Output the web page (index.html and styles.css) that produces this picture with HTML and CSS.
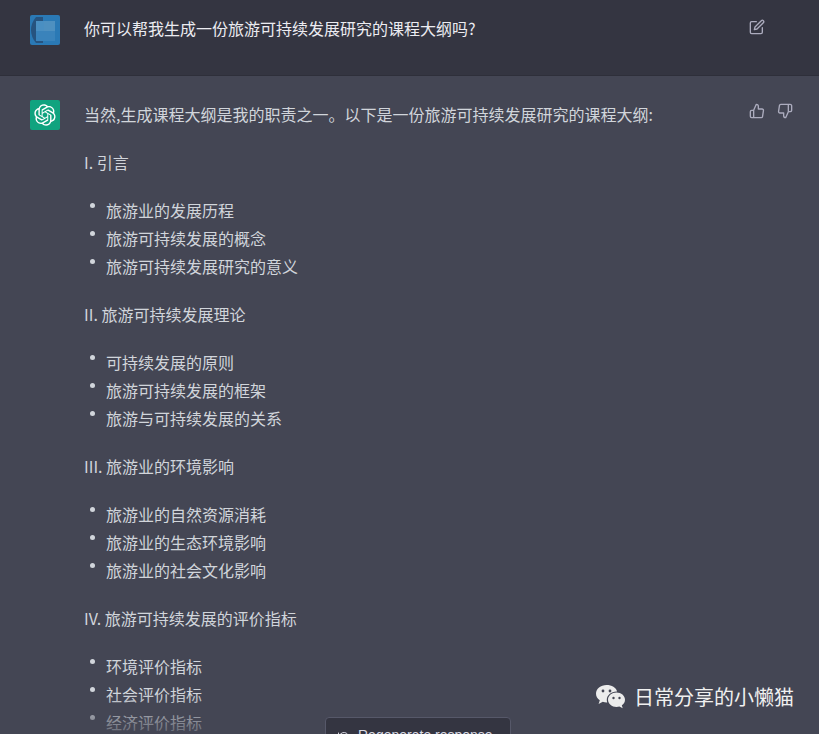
FILE: index.html
```html
<!DOCTYPE html>
<html lang="zh">
<head>
<meta charset="utf-8">
<title>ChatGPT</title>
<link rel="stylesheet" href="styles.css">
</head>
<body>
<main class="chat">
  <section class="row row-user">
    <div class="avatar avatar-user">
      <svg viewBox="0 0 30 30" width="30" height="30">
        <rect width="30" height="30" fill="#2a79b5"/>
        <path d="M6 2 H13 V28 H6 Q1 22 1 15 Q1 8 6 2Z" fill="#26537f"/>
        <rect x="6" y="6" width="19" height="10" fill="#4a8fc2"/>
        <rect x="6" y="16" width="19" height="10" fill="#3a83bb"/>
        <rect x="14" y="6" width="11" height="10" fill="#4e90c0"/>
      </svg>
    </div>
    <p class="question">你可以帮我生成一份旅游可持续发展研究的课程大纲吗?</p>
    <div class="actions">
      <svg class="icon" viewBox="0 0 24 24"><path d="M11 4H4a2 2 0 0 0-2 2v14a2 2 0 0 0 2 2h14a2 2 0 0 0 2-2v-7"/><path d="M18.5 2.5a2.121 2.121 0 0 1 3 3L12 15l-4 1 1-4 9.5-9.5z"/></svg>
    </div>
  </section>
  <section class="row row-bot">
    <div class="avatar avatar-bot">
      <svg viewBox="0 0 41 41" width="22" height="22"><path fill="#fff" d="M37.5324 16.8707C37.9808 15.5241 38.1363 14.0974 37.9886 12.6859C37.8409 11.2744 37.3934 9.91076 36.676 8.68622C35.6126 6.83404 33.9882 5.3676 32.0373 4.4985C30.0864 3.62941 27.9098 3.40259 25.8215 3.85078C24.8796 2.7893 23.7219 1.94125 22.4257 1.36341C21.1295 0.785575 19.7249 0.491269 18.3058 0.500197C16.1708 0.495044 14.0893 1.16803 12.3614 2.42214C10.6335 3.67624 9.34853 5.44666 8.6917 7.47815C7.30085 7.76286 5.98686 8.3414 4.8377 9.17505C3.68854 10.0087 2.73073 11.0782 2.02839 12.312C0.956464 14.1591 0.498905 16.2988 0.721698 18.4228C0.944492 20.5467 1.83612 22.5449 3.268 24.1293C2.81966 25.4759 2.66413 26.9026 2.81182 28.3141C2.95951 29.7256 3.40701 31.0892 4.12437 32.3138C5.18791 34.1659 6.8123 35.6322 8.76321 36.5013C10.7141 37.3704 12.8907 37.5973 14.9789 37.1492C15.9208 38.2107 17.0786 39.0587 18.3747 39.6366C19.6709 40.2144 21.0755 40.5087 22.4946 40.4998C24.6307 40.5054 26.7133 39.8321 28.4418 38.5772C30.1704 37.3223 31.4556 35.5506 32.1119 33.5179C33.5027 33.2332 34.8167 32.6547 35.9659 31.821C37.115 30.9874 38.0728 29.9178 38.7752 28.684C39.8458 26.8371 40.3023 24.6979 40.0789 22.5748C39.8556 20.4517 38.9639 18.4544 37.5324 16.8707ZM22.4978 37.8849C20.7443 37.8874 19.0459 37.2733 17.6994 36.1501C17.7601 36.117 17.8666 36.0586 17.936 36.0161L25.9004 31.4156C26.1003 31.3019 26.2663 31.137 26.3813 30.9378C26.4964 30.7386 26.5563 30.5124 26.5549 30.2825V19.0542L29.9213 20.998C29.9389 21.0068 29.9541 21.0198 29.9656 21.0359C29.977 21.052 29.9842 21.0707 29.9867 21.0902V30.3889C29.9842 32.375 29.1946 34.2791 27.7909 35.6841C26.3872 37.0892 24.4838 37.8806 22.4978 37.8849ZM6.39227 31.0064C5.51397 29.4888 5.19742 27.7107 5.49804 25.9832C5.55718 26.0187 5.66048 26.0818 5.73461 26.1244L13.699 30.7248C13.8975 30.8408 14.1233 30.902 14.3532 30.902C14.583 30.902 14.8088 30.8408 15.0073 30.7248L24.731 25.1103V28.9979C24.7321 29.0177 24.7283 29.0376 24.7199 29.0556C24.7115 29.0736 24.6988 29.0893 24.6829 29.1012L16.6317 33.7497C14.9096 34.7416 12.8643 35.0097 10.9447 34.4954C9.02506 33.9811 7.38785 32.7263 6.39227 31.0064ZM4.29707 13.6194C5.17156 12.0998 6.55279 10.9364 8.19885 10.3327C8.19885 10.4013 8.19491 10.5228 8.19491 10.6071V19.808C8.19351 20.0378 8.25334 20.2638 8.36823 20.4629C8.48312 20.6619 8.64893 20.8267 8.84863 20.9404L18.5723 26.5542L15.206 28.4979C15.1894 28.5089 15.1703 28.5155 15.1505 28.5173C15.1307 28.5191 15.1107 28.516 15.0924 28.5082L7.04046 23.8557C5.32135 22.8601 4.06716 21.2235 3.55289 19.3046C3.03862 17.3858 3.30624 15.3413 4.29707 13.6194ZM31.955 20.0556L22.2312 14.4411L25.5976 12.4981C25.6142 12.4872 25.6333 12.4805 25.6531 12.4787C25.6729 12.4769 25.6928 12.4801 25.7111 12.4879L33.7631 17.1364C34.9967 17.849 36.0017 18.8982 36.6606 20.1613C37.3194 21.4244 37.6047 22.849 37.4832 24.2684C37.3617 25.6878 36.8382 27.0432 35.9743 28.1759C35.1103 29.3086 33.9415 30.1717 32.6047 30.6641C32.6047 30.5947 32.6047 30.4733 32.6047 30.3889V21.188C32.6066 20.9586 32.5474 20.7328 32.4332 20.5338C32.319 20.3348 32.154 20.1698 31.955 20.0556ZM35.3055 15.0128C35.2464 14.9765 35.1431 14.9142 35.069 14.8717L27.1045 10.2712C26.906 10.1554 26.6803 10.0943 26.4504 10.0943C26.2206 10.0943 25.9948 10.1554 25.7963 10.2712L16.0726 15.8858V11.9982C16.0715 11.9783 16.0753 11.9585 16.0837 11.9405C16.0921 11.9225 16.1048 11.9068 16.1207 11.8949L24.1719 7.25025C25.4053 6.53903 26.8158 6.19376 28.2383 6.25482C29.6608 6.31589 31.0364 6.78077 32.2044 7.59508C33.3723 8.40939 34.2842 9.53945 34.8334 10.8531C35.3826 12.1667 35.5464 13.6095 35.3055 15.0128ZM14.2424 21.9419L10.8752 19.9981C10.8576 19.9893 10.8423 19.9763 10.8309 19.9602C10.8195 19.9441 10.8122 19.9254 10.8098 19.9058V10.6071C10.8107 9.18295 11.2173 7.78848 11.9819 6.58696C12.7466 5.38544 13.8377 4.42659 15.1275 3.82264C16.4173 3.21869 17.8524 2.99464 19.2649 3.1767C20.6775 3.35876 22.0089 3.93941 23.1034 4.85067C23.0427 4.88379 22.937 4.94215 22.8668 4.98473L14.9024 9.58517C14.7025 9.69878 14.5366 9.86356 14.4215 10.0626C14.3065 10.2616 14.2466 10.4877 14.2479 10.7175L14.2424 21.9419ZM16.071 17.9991L20.4018 15.4978L24.7325 17.9975V22.9985L20.4018 25.4983L16.071 22.9985V17.9991Z"/></svg>
    </div>
    <div class="answer">
      <p>当然,生成课程大纲是我的职责之一。以下是一份旅游可持续发展研究的课程大纲:</p>
      <p>I. 引言</p>
      <ul>
        <li>旅游业的发展历程</li>
        <li>旅游可持续发展的概念</li>
        <li>旅游可持续发展研究的意义</li>
      </ul>
      <p>II. 旅游可持续发展理论</p>
      <ul>
        <li>可持续发展的原则</li>
        <li>旅游可持续发展的框架</li>
        <li>旅游与可持续发展的关系</li>
      </ul>
      <p>III. 旅游业的环境影响</p>
      <ul>
        <li>旅游业的自然资源消耗</li>
        <li>旅游业的生态环境影响</li>
        <li>旅游业的社会文化影响</li>
      </ul>
      <p>IV. 旅游可持续发展的评价指标</p>
      <ul>
        <li>环境评价指标</li>
        <li>社会评价指标</li>
        <li>经济评价指标</li>
      </ul>
    </div>
    <div class="actions actions-bot">
      <svg class="icon" viewBox="0 0 24 24"><path d="M14 9V5a3 3 0 0 0-3-3l-4 9v11h11.28a2 2 0 0 0 2-1.7l1.38-9a2 2 0 0 0-2-2.3zM7 22H4a2 2 0 0 1-2-2v-7a2 2 0 0 1 2-2h3"/></svg>
      <svg class="icon" viewBox="0 0 24 24"><path d="M10 15v4a3 3 0 0 0 3 3l4-9V2H5.72a2 2 0 0 0-2 1.7l-1.38 9a2 2 0 0 0 2 2.3zm7-13h2.67A2.31 2.31 0 0 1 22 4v7a2.31 2.31 0 0 1-2.33 2H17"/></svg>
    </div>
  </section>
</main>
<div class="fade"></div>
<button class="regen" type="button">
  <svg class="regen-icon" viewBox="0 0 24 24"><path d="M1 4v6h6"/><path d="M3.51 15a9 9 0 1 0 2.13-9.36L1 10"/></svg>
  <span>Regenerate response</span>
</button>
<div class="mark">
  <svg class="mark-logo" viewBox="0 0 32 26" width="32" height="26">
    <path fill="#ececec" d="M11.5 1C5.7 1 1 4.9 1 9.7c0 2.7 1.5 5 3.8 6.6L3.6 20l4.2-2.2c1.2.4 2.4.6 3.7.6h.7c-.3-.9-.4-1.8-.4-2.7 0-4.6 4.3-8.3 9.7-8.3h.6C21.100 3.500 16.800 1 11.500 1z"/>
    <circle cx="8" cy="7" r="1.400" fill="#444654"/>
    <circle cx="15" cy="7" r="1.400" fill="#444654"/>
    <path fill="#ececec" d="M21.500 8.500c-4.700 0-8.500 3.200-8.500 7.200s3.800 7.200 8.500 7.200c1 0 2-.2 2.900-.4l3.300 1.800-.9-3c1.900-1.300 3.200-3.300 3.200-5.600 0-4-3.800-7.200-8.500-7.200z"/>
    <circle cx="18.500" cy="14" r="1.200" fill="#444654"/>
    <circle cx="24.500" cy="14" r="1.200" fill="#444654"/>
  </svg>
  <span>日常分享的小懒猫</span>
</div>
</body>
</html>
```
FILE: styles.css
```css
* { box-sizing: border-box; }
html, body { margin: 0; height: 100%; }
body {
  position: relative;
  height: 734px;
  overflow: hidden;
  background: #444654;
  font-family: "Noto Sans CJK SC", "Liberation Sans", sans-serif;
  font-size: 16px;
  line-height: 28px;
  color: #d1d5db;
}
p { margin: 0; }
.row { display: flex; padding-left: 30px; }
.row-user {
  height: 76px;
  padding-top: 14px;
  background: #343541;
  border-bottom: 1px solid #2e2f3a;
}
.row-bot { padding-top: 24px; background: #444654; }
.avatar {
  flex: none;
  width: 30px;
  height: 30px;
  margin-right: 24px;
  border-radius: 2px;
  overflow: hidden;
}
.avatar-user { margin-top: 1px; }
.avatar-user svg { display: block; }
.avatar-bot {
  display: flex;
  align-items: center;
  justify-content: center;
  background: #10a37f;
}
.question { flex: 1; color: #ececf1; }
.answer { flex: 1; }
.answer p { margin-bottom: 20px; }
.answer ul { margin: 0 0 20px; padding: 0 0 0 6px; list-style: none; }
.answer li { display: flex; }
.answer li::before {
  content: "";
  flex: none;
  width: 5px;
  height: 5px;
  margin: 7px 11px 0 0;
  border-radius: 50%;
  background: #d1d5db;
}
.actions { display: flex; gap: 12px; flex: none; width: 70px; padding-top: 5px; }
.actions-bot { padding-top: 3px; }
.icon {
  width: 16px;
  height: 16px;
  fill: none;
  stroke: #acacbe;
  stroke-width: 2;
  stroke-linecap: round;
  stroke-linejoin: round;
}
.fade {
  position: absolute;
  left: 0;
  right: 0;
  bottom: 0;
  height: 40px;
  background: linear-gradient(to bottom, rgba(68,70,84,0), rgba(68,70,84,.75));
}
.regen {
  position: absolute;
  left: 325px;
  top: 717px;
  width: 186px;
  height: 38px;
  display: flex;
  align-items: flex-start;
  gap: 8px;
  padding: 7px 12px;
  background: #343541;
  border: 1px solid #565869;
  border-radius: 4px;
  color: #d9d9e3;
  font-family: "Liberation Sans", sans-serif;
  font-size: 14px;
  line-height: 20px;
}
.regen-icon {
  width: 12px;
  height: 12px;
  margin-top: 6px;
  fill: none;
  stroke: #d9d9e3;
  stroke-width: 2;
  stroke-linecap: round;
  stroke-linejoin: round;
}
.mark {
  position: absolute;
  left: 595px;
  top: 682px;
  display: flex;
  align-items: center;
  gap: 7px;
  color: #f0f0f0;
  font-size: 20px;
  line-height: 30px;
}
.mark-logo { display: block; }
```
